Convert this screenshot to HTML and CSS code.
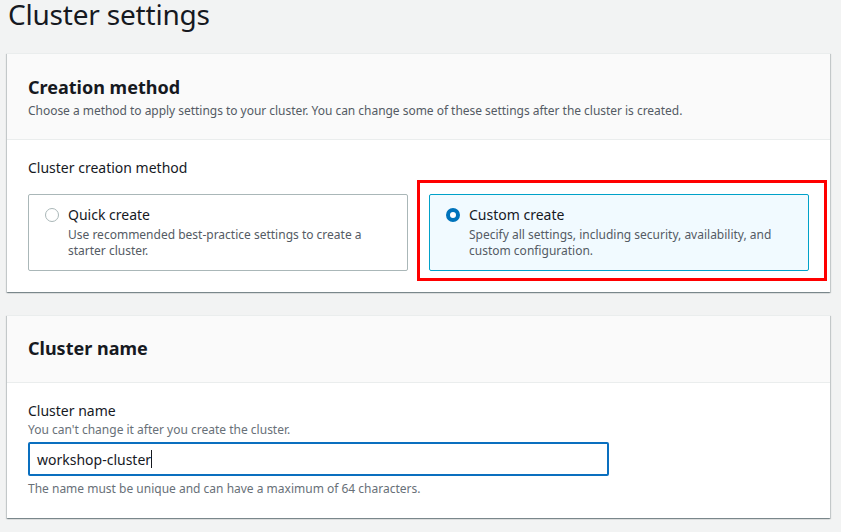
FILE: index.html
```html
<!DOCTYPE html>
<html lang="en">
<head>
<meta charset="utf-8">
<title>Cluster settings</title>
<link rel="stylesheet" href="styles.css">
</head>
<body>
<main class="page">
  <h1 class="page-title">Cluster settings</h1>

  <section class="card">
    <header class="card-header">
      <h2 class="card-title">Creation method</h2>
      <p class="card-desc">Choose a method to apply settings to your cluster. You can change some of these settings after the cluster is created.</p>
    </header>
    <div class="card-body">
      <div class="field-label">Cluster creation method</div>
      <div class="tiles">
        <label class="tile">
          <span class="radio"></span>
          <span class="tile-text">
            <span class="tile-title">Quick create</span>
            <span class="tile-desc">Use recommended best-practice settings to create a starter cluster.</span>
          </span>
        </label>
        <div class="highlight">
          <label class="tile tile-selected">
            <span class="radio radio-checked"></span>
            <span class="tile-text">
              <span class="tile-title">Custom create</span>
              <span class="tile-desc">Specify all settings, including security, availability, and custom configuration.</span>
            </span>
          </label>
        </div>
      </div>
    </div>
  </section>

  <section class="card card-name">
    <header class="card-header card-header-plain">
      <h2 class="card-title">Cluster name</h2>
    </header>
    <div class="card-body card-body-name">
      <div class="field-label">Cluster name</div>
      <div class="field-hint">You can't change it after you create the cluster.</div>
      <div class="input"><span>workshop-cluster</span><span class="caret"></span></div>
      <div class="field-constraint">The name must be unique and can have a maximum of 64 characters.</div>
    </div>
  </section>
</main>
</body>
</html>
```

FILE: styles.css
```css
* { box-sizing: border-box; }

html, body {
  margin: 0;
  padding: 0;
  background: #f2f3f3;
  height: 100%;
  overflow: hidden;
}

body {
  font-family: "Noto Sans", "Open Sans", sans-serif;
  color: #16191f;
}

.page {
  display: flex;
  flex-direction: column;
  padding: 0 11px 0 7px;
}

.page-title {
  margin: 0 0 0 1px;
  font-size: 28px;
  font-weight: 400;
  line-height: 28px;
  letter-spacing: -0.2px;
  color: #16191f;
}

.card {
  margin-top: 25px;
  background: #fff;
  box-shadow: 0 1px 1px 0 rgba(0, 28, 36, 0.3), 1px 1px 1px 0 rgba(0, 28, 36, 0.15), -1px 1px 1px 0 rgba(0, 28, 36, 0.15);
  border-top: 1px solid #eaeded;
}

.card-name { margin-top: 23px; }

.card-header {
  background: #fafafa;
  border-bottom: 1px solid #eaeded;
  padding: 21px 20px 20px 21px;
  height: 86px;
}

.card-header-plain {
  height: 67px;
  padding-top: 20px;
}

.card-title {
  margin: 0;
  font-size: 18px;
  font-weight: 700;
  line-height: 24px;
}

.card-desc {
  margin: 4px 0 0;
  font-size: 12px;
  line-height: 16px;
  color: #545b64;
  letter-spacing: -0.03px;
}

.card-body {
  padding: 18px 21px 21px 21px;
}

.field-label {
  font-size: 14px;
  line-height: 20px;
  color: #16191f;
}

.tiles {
  margin-top: 16px;
  display: grid;
  grid-template-columns: 1fr 1fr;
  gap: 21px;
}

.tile {
  display: flex;
  gap: 9px;
  height: 77px;
  border: 1px solid #aab7b8;
  border-radius: 2px;
  padding: 11px 16px 10px 16px;
  background: #fff;
}

.tile-selected {
  background: #f1faff;
  border-color: #00a1c9;
}

.highlight {
  position: relative;
}

.highlight::after {
  content: "";
  position: absolute;
  top: -14px;
  left: -12px;
  right: -18px;
  bottom: -10px;
  border: 3px solid #ff0000;
  pointer-events: none;
}

.radio {
  flex: none;
  width: 14px;
  height: 14px;
  margin-top: 2px;
  border-radius: 50%;
  border: 1.5px solid #aab7b8;
  background: #fff;
}

.radio-checked {
  border: 4px solid #0073bb;
}

.tile-text {
  display: flex;
  flex-direction: column;
}

.tile-title {
  font-size: 14px;
  line-height: 18px;
  color: #16191f;
}

.tile-desc {
  margin-top: 3px;
  font-size: 12px;
  line-height: 16px;
  color: #545b64;
}

.card-body-name {
  padding-top: 18px;
  padding-bottom: 21px;
}

.field-hint {
  margin-top: 1px;
  font-size: 12px;
  line-height: 16px;
  color: #687078;
}

.input {
  margin-top: 4px;
  width: 581px;
  height: 34px;
  border: 2px solid #0a6fbf;
  border-radius: 2px;
  display: flex;
  align-items: center;
  padding-left: 7px;
  font-size: 14px;
  color: #16191f;
  background: #fff;
}

.caret {
  display: inline-block;
  width: 1px;
  height: 18px;
  background: #16191f;
}

.field-constraint {
  margin-top: 5px;
  font-size: 12px;
  line-height: 16px;
  color: #687078;
}
```
